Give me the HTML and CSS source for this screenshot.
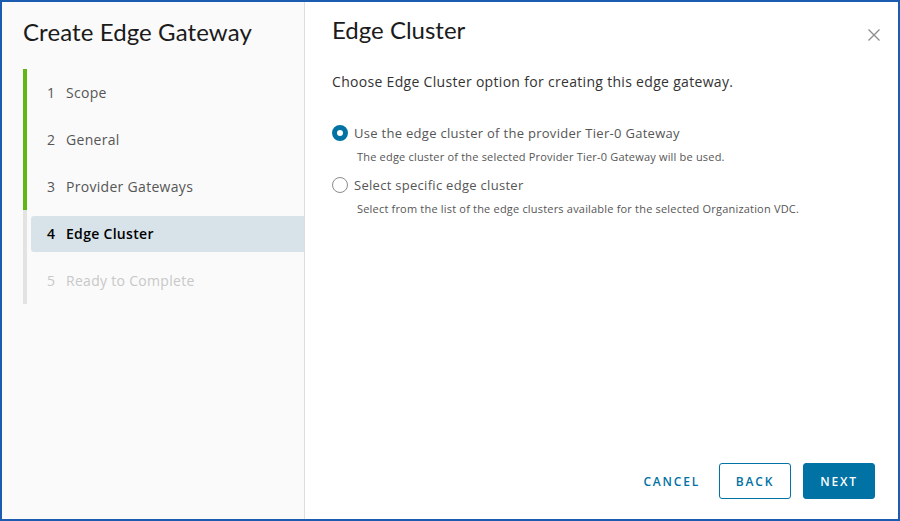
FILE: index.html
```html
<!DOCTYPE html>
<html>
<head>
<meta charset="utf-8">
<link rel="stylesheet" href="styles.css">
</head>
<body>
<div class="frame">
  <aside class="nav">
    <h1 class="nav-title">Create Edge Gateway</h1>
    <ul class="steps">
      <li class="step done"><div class="step-item"><span class="num">1</span>Scope</div></li>
      <li class="step done"><div class="step-item"><span class="num">2</span>General</div></li>
      <li class="step done"><div class="step-item"><span class="num">3</span>Provider Gateways</div></li>
      <li class="step current"><div class="step-item"><span class="num">4</span>Edge Cluster</div></li>
      <li class="step disabled"><div class="step-item"><span class="num">5</span>Ready to Complete</div></li>
    </ul>
  </aside>
  <main class="content">
    <header class="content-head">
      <h2 class="content-title">Edge Cluster</h2>
      <button class="close" aria-label="Close">
        <svg width="14" height="14" viewBox="0 0 14 14"><path d="M1.5 1.5 L12.5 12.5 M12.5 1.5 L1.5 12.5" stroke="#8c8c8c" stroke-width="1.3" fill="none"/></svg>
      </button>
    </header>
    <p class="desc">Choose Edge Cluster option for creating this edge gateway.</p>
    <div class="options">
      <div class="option">
        <label class="radio-row"><span class="radio checked"></span><span class="radio-label">Use the edge cluster of the provider Tier-0 Gateway</span></label>
        <p class="helper">The edge cluster of the selected Provider Tier-0 Gateway will be used.</p>
      </div>
      <div class="option">
        <label class="radio-row"><span class="radio"></span><span class="radio-label">Select specific edge cluster</span></label>
        <p class="helper">Select from the list of the edge clusters available for the selected Organization VDC.</p>
      </div>
    </div>
    <footer class="footer">
      <button class="btn btn-link">CANCEL</button>
      <button class="btn btn-outline">BACK</button>
      <button class="btn btn-primary">NEXT</button>
    </footer>
  </main>
</div>
</body>
</html>
```

FILE: styles.css
```css
* { box-sizing: border-box; }
html, body { margin: 0; padding: 0; }
body {
  font-family: "Open Sans", "Noto Sans", sans-serif;
  color: #565656;
  background: #fff;
}
.frame {
  width: 900px;
  height: 521px;
  border: 2px solid #1b5cb0;
  display: flex;
  background: #fff;
}
.nav {
  width: 303px;
  flex: none;
  background: #fafafa;
  border-right: 1px solid #dedede;
  padding: 15px 0 0 21px;
}
.nav-title {
  margin: 0;
  font-family: Lato, "Open Sans", sans-serif;
  font-size: 24px;
  line-height: 30px;
  font-weight: 400;
  letter-spacing: 0.1px;
  color: #1b1b1b;
}
.steps {
  list-style: none;
  margin: 22px 0 0 0;
  padding: 0;
}
.step {
  height: 47px;
  display: flex;
  align-items: center;
  border-left: 4px solid #e3e3e3;
}
.step.done { border-left-color: #5eb715; }
.step-item {
  flex: 1;
  height: 36px;
  margin-left: 4px;
  padding-left: 16px;
  display: flex;
  align-items: center;
  font-size: 14px;
  letter-spacing: 0.3px;
  color: #565656;
  border-radius: 3px 0 0 3px;
}
.num { width: 19px; flex: none; }
.step.current .step-item {
  background: #d8e3e9;
  color: #000;
  font-weight: 600;
}
.step.disabled .step-item { color: #c8c8c8; }

.content {
  flex: 1;
  display: flex;
  flex-direction: column;
  padding: 13px 23px 20px 27px;
}
.content-head {
  display: flex;
  align-items: flex-start;
  justify-content: space-between;
}
.content-title {
  margin: 0;
  font-family: Lato, "Open Sans", sans-serif;
  font-size: 24px;
  line-height: 30px;
  font-weight: 400;
  color: #1b1b1b;
}
.close {
  border: 0;
  background: none;
  padding: 0;
  margin-top: 13px;
  margin-right: -6px;
  width: 14px;
  height: 14px;
}
.close svg { display: block; }
.desc {
  margin: 27px 0 0 0;
  font-size: 14px;
  line-height: 20px;
  letter-spacing: 0.31px;
  color: #333;
}
.options { margin-top: 31px; }
.option { margin-bottom: 9px; }
.radio-row {
  display: flex;
  align-items: center;
  height: 20px;
}
.radio {
  width: 16px;
  height: 16px;
  border-radius: 50%;
  border: 1px solid #8c8c8c;
  background: #fff;
  margin-right: 6px;
  flex: none;
}
.radio.checked {
  border: 5px solid #0072a3;
  background: #fff;
}
.radio-label {
  font-size: 13px;
  letter-spacing: 0.29px;
  color: #565656;
}
.helper {
  margin: 5px 0 0 25px;
  font-size: 11px;
  line-height: 18px;
  letter-spacing: 0.19px;
  color: #565656;
}
.footer {
  margin-top: auto;
  display: flex;
  justify-content: flex-end;
  align-items: center;
  gap: 12px;
}
.btn {
  font-family: inherit;
  height: 36px;
  min-width: 72px;
  padding: 0 12px;
  font-size: 12px;
  font-weight: 600;
  letter-spacing: 0.15em;
  border-radius: 3px;
  cursor: pointer;
}
.btn-link {
  border: 1px solid transparent;
  background: none;
  color: #0072a3;
  padding: 0 6px;
  min-width: 0;
}
.btn-outline {
  border: 1px solid #0072a3;
  background: #fff;
  color: #0072a3;
}
.btn-primary {
  border: 1px solid #0072a3;
  background: #0072a3;
  color: #fff;
}
```
